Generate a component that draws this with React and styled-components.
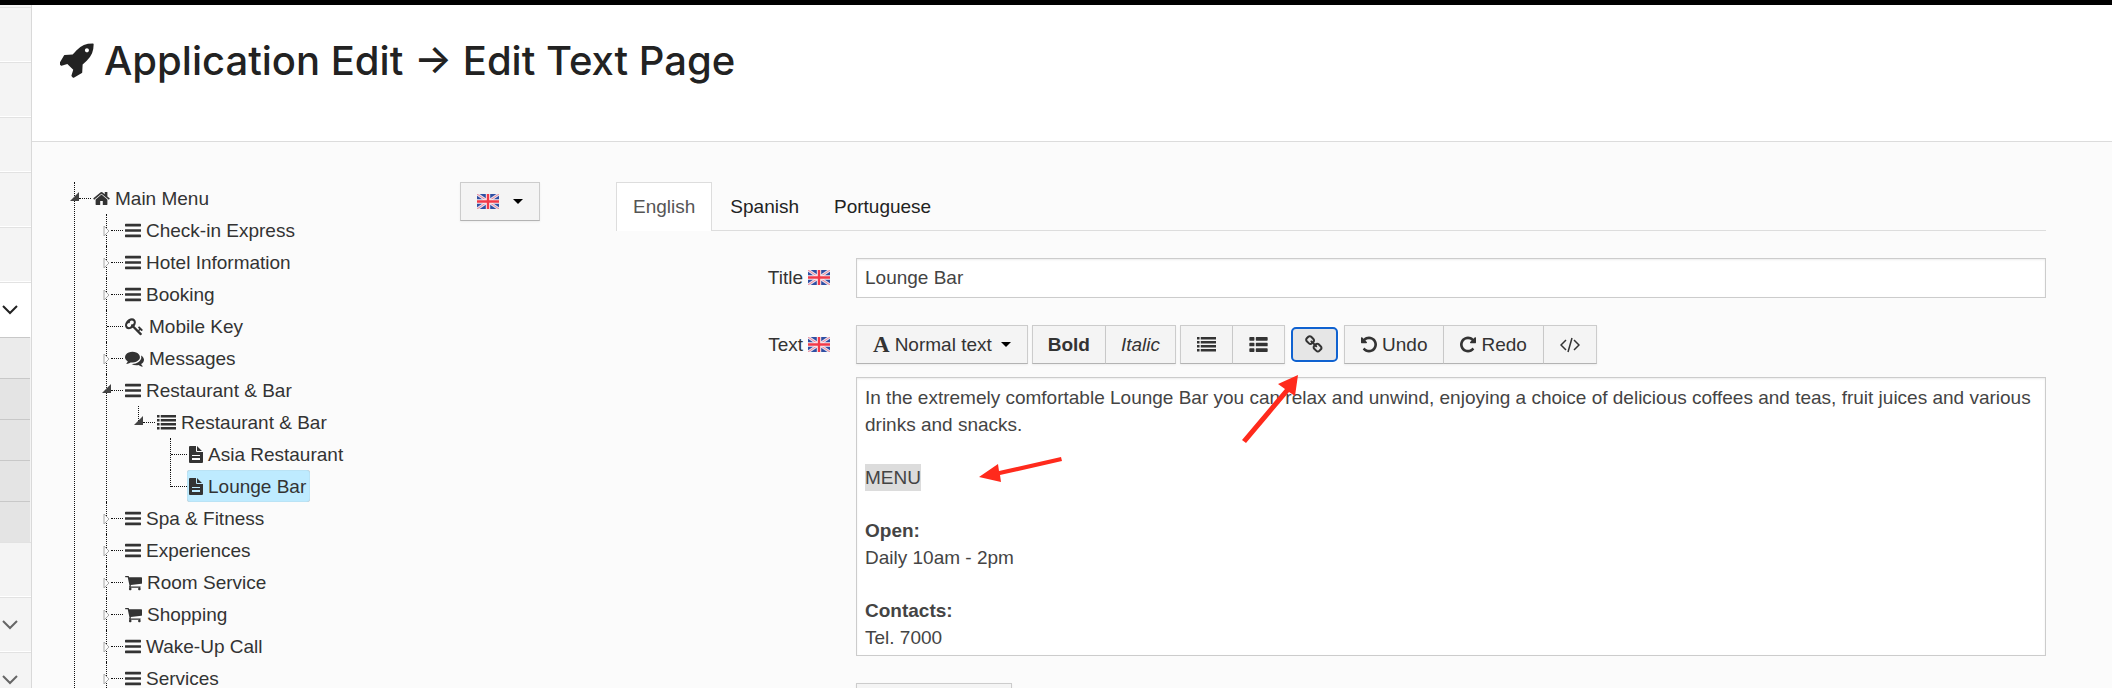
import React from 'react'
import styled, { createGlobalStyle, css } from 'styled-components'

const GlobalStyle = createGlobalStyle`
  * {
    box-sizing: border-box;
  }
  body {
    margin: 0;
    color: #333;
    background-color: #fbfbfb;
    font: 19px/27px 'Liberation Sans', Arial, sans-serif;
  }
  button,
  input,
  select {
    font: inherit;
    color: inherit;
  }
  a {
    color: inherit;
    text-decoration: none;
  }
`

const Page = styled.div`
  display: flex;
  height: 100vh;
  overflow: hidden;
  border-top: 5px solid #000;
`

const Sidebar = styled.nav`
  flex: 0 0 32px;
  padding-top: 2px;
  background-color: #f4f4f4;
  border-right: 1px solid #d9d9d9;
`
const SideItem = styled.button`
  display: flex;
  align-items: center;
  width: 100%;
  height: 55px;
  padding: 0 0 0 2px;
  border: 0;
  border-top: 1px solid #e2e2e2;
  border-bottom: 1px solid #fff;
  color: #666;
  background-color: ${props => props.$active ? '#fff' : 'transparent'};
  ${props => props.$active && css`color: #222;`}
`
const SubItem = styled.button`
  display: block;
  width: 30px;
  height: 41px;
  padding: 0;
  border: 0;
  border-top: 1px solid #c8c8c8;
  background-color: ${props => props.$first ? '#ebebeb' : '#e4e4e4'};
`

const Main = styled.main`
  flex: 1;
  min-width: 0;
`
const Header = styled.header`
  height: 137px;
  padding: 32px 28px;
  background-color: #fff;
  border-bottom: 1px solid #dcdcdc;
`
const Heading = styled.h1`
  display: flex;
  align-items: center;
  gap: 9px;
  margin: 0;
  color: #222;
  font: 500 40px/48px Inter, 'Open Sans', sans-serif;
`
const Content = styled.div`
  display: grid;
  grid-template-columns: 386fr 156fr 1430fr;
  align-items: start;
  padding: 40px 66px 0 42px;
`

const Branch = styled.ul`
  list-style: none;
  margin: 0 0 0 ${props => props.$nested ? '31px' : '0'};
  padding: 0;
`
const Node = styled.li`
  display: grid;
  grid-template-columns: 1px 1fr;
`
const Rail = styled.span`
  position: relative;
  height: ${props => props.$last ? '17px' : 'auto'};
  border-left: 1px dotted #111;
`
const Expander = styled.svg`
  position: absolute;
  top: ${props => props.$open ? '10px' : '11px'};
  left: ${props => props.$open ? '-5px' : '-4px'};
`
const NodeRow = styled.div`
  display: flex;
  align-items: center;
  height: 32px;
`
const Connector = styled.span`
  width: ${props => props.$leaf ? '16px' : '12px'};
  margin-left: ${props => props.$leaf ? '0' : '4px'};
  border-top: 1px dotted #111;
`
const NodeLink = styled.a`
  display: flex;
  align-items: center;
  gap: 5px;
  height: 32px;
  padding: 0 4px 0 2px;
  border-radius: 3px;
  white-space: nowrap;
  ${props => props.$selected && css`
    background-color: #beebff;
    box-shadow: inset 0 0 1px #999;
  `}
`

const Button = styled.button`
  display: inline-flex;
  align-items: center;
  justify-content: center;
  gap: 5px;
  height: 39px;
  padding: 0 16px;
  color: #333;
  background-color: #f4f4f4;
  border: 1px solid #ccc;
  border-bottom-color: #b3b3b3;
  box-shadow: 0 1px 2px rgba(0, 0, 0, 0.06);
  white-space: nowrap;
`
const StyleButton = styled(Button)`
  padding: 0 15px;
  font-weight: ${props => props.$bold ? 700 : 400};
  font-style: ${props => props.$italic ? 'italic' : 'normal'};
`
const LanguageButton = styled(Button)`
  width: 80px;
  gap: 14px;
`
const LinkButton = styled(Button)`
  height: 35px;
  margin: 2px;
  padding: 0 12px;
  background-color: #e6e6e6;
  border: 2px solid #1062d0;
  border-radius: 5px;
  box-shadow: 0 0 0 1px #fff;
`
const Caret = styled.span`
  border: 5px solid transparent;
  border-top-color: #000;
  border-bottom: 0;
  margin-left: ${props => props.$spaced ? '4px' : '0'};
`
const FontGlyph = styled.span`
  font: 700 23px/27px 'Liberation Serif', serif;
`

const Tabs = styled.div`
  display: flex;
  gap: 1px;
  border-bottom: 1px solid #ddd;
`
const Tab = styled.button`
  height: 49px;
  margin-bottom: -1px;
  padding: 0 16px 2px;
  color: ${props => props.$active ? '#555' : '#222'};
  background-color: ${props => props.$active ? '#fff' : 'transparent'};
  border: 1px solid ${props => props.$active ? '#ddd' : 'transparent'};
  border-bottom: 0;
`
const Form = styled.form`
  display: grid;
  gap: 27px;
  padding-top: 27px;
`
const Field = styled.div`
  display: grid;
  grid-template-columns: 24fr 119fr;
  align-items: start;
`
const Label = styled.label`
  display: flex;
  align-items: center;
  justify-content: flex-end;
  gap: 5px;
  height: 39px;
  padding-right: 26px;
`
const TextInput = styled.input`
  width: 100%;
  height: 40px;
  padding: 0 8px;
  color: #444;
  background-color: #fff;
  border: 1px solid #ccc;
  box-shadow: inset 0 1px 2px rgba(0, 0, 0, 0.08);
`
const Toolbar = styled.div`
  display: flex;
  gap: 4px;
  margin-bottom: 13px;
`
const Group = styled.div`
  display: flex;
  ${Button} + ${Button} {
    border-left: 0;
  }
`
const EditorWrap = styled.div`
  position: relative;
`
const Editor = styled.div`
  height: 279px;
  padding: 6px 3px 0 8px;
  color: #444;
  background-color: #fff;
  border: 1px solid #ccc;
  box-shadow: inset 0 1px 2px rgba(0, 0, 0, 0.08);
  overflow: hidden;
`
const Paragraph = styled.p`
  margin: 0 0 26px;
`
const Selection = styled.span`
  display: inline-block;
  background-color: #dcdcdc;
`
const Pointers = styled.svg`
  position: absolute;
  top: -6px;
  left: 116px;
  pointer-events: none;
`
const FooterButton = styled(Button)`
  width: 156px;
`

const icons = {
  rocket: {
    box: '64 128 1664 1664',
    path: 'M1440 448q0-40-28-68t-68-28-68 28-28 68 28 68 68 28 68-28 28-68zm224-288q0 249-75.5 430.5t-253.5 360.5q-81 80-195 176l-20 379q-2 16-16 26l-384 224q-7 4-16 4-12 0-23-9l-64-64q-13-14-8-32l85-276-281-281-276 85q-3 1-9 1-14 0-23-9l-64-64q-17-19-5-39l224-384q10-14 26-16l379-20q96-114 176-195 188-187 358-258t431-71q14 0 24 9.5t10 22.5z'
  },
  home: {
    width: 17,
    box: '64 0 1664 1792',
    path: 'M1472 992v480q0 26-19 45t-45 19h-384v-384h-256v384h-384q-26 0-45-19t-19-45v-480q0-1 .5-3t.5-3l575-474 575 474q1 2 1 6zm223-69l-62 74q-8 9-21 11h-3q-13 0-21-7l-692-577-692 577q-12 8-24 7-13-2-21-11l-62-74q-8-10-7-23.5t11-21.5l719-599q32-26 76-26t76 26l244 204v-195q0-14 9-23t23-9h192q14 0 23 9t9 23v408l219 182q10 8 11 21.5t-7 23.5z'
  },
  bars: {
    width: 16,
    box: '128 0 1536 1792',
    path: 'M1664 1344v128q0 26-19 45t-45 19h-1408q-26 0-45-19t-19-45v-128q0-26 19-45t45-19h1408q26 0 45 19t19 45zm0-512v128q0 26-19 45t-45 19h-1408q-26 0-45-19t-19-45v-128q0-26 19-45t45-19h1408q26 0 45 19t19 45zm0-512v128q0 26-19 45t-45 19h-1408q-26 0-45-19t-19-45v-128q0-26 19-45t45-19h1408q26 0 45 19t19 45z'
  },
  key: {
    path: 'M832 512q0-80-56-136t-136-56-136 56-56 136q0 42 19 83-41-19-83-19-80 0-136 56t-56 136 56 136 136 56 136-56 56-136q0-42-19-83 41 19 83 19 80 0 136-56t56-136zm851 704q0 17-49 66t-66 49q-9 0-28.5-16t-36.5-33-38.5-40-24.5-26l-96 96 220 220q28 28 28 68 0 42-39 81t-81 39q-40 0-68-28l-671-671q-176 131-365 131-163 0-265.5-102.5t-102.5-265.5q0-160 95-313t248-248 313-95q163 0 265.5 102.5t102.5 265.5q0 189-131 365l355 355 96-96q-3-3-26-24.5t-40-38.5-33-36.5-16-28.5q0-17 49-66t66-49q13 0 23 10 6 6 46 44.5t82 79.5 86.5 86 73 78 28.5 41z'
  },
  comments: {
    path: 'M1408 768q0 139-94 257t-256.5 186.5-353.5 68.5q-86 0-176-16-124 88-278 128-36 9-86 16h-3q-11 0-20.5-8t-11.5-21q-1-3-1-6.5t.5-6.5 2-6l2.5-5 3.5-5.5 4-5 4.5-5 4-4.5q5-6 23-25t26-29.5 22.5-29 25-38.5 20.5-44q-124-72-195-177t-71-224q0-139 94-257t256.5-186.5 353.5-68.5 353.5 68.5 256.5 186.5 94 257zm384 256q0 120-71 224.5t-195 176.5q10 24 20.5 44t25 38.5 22.5 29 26 29.5 23 25q1 1 4 4.5t4.5 5 4 5 3.5 5.5l2.5 5 2 6 .5 6.5-1 6.5q-3 14-13 22t-22 7q-50-7-86-16-154-40-278-128-90 16-176 16-271 0-472-132 58 4 88 4 161 0 309-45t264-129q125-92 192-212t67-254q0-77-23-152 129 71 204 178t75 230z'
  },
  cart: {
    width: 17,
    box: '64 0 1664 1792',
    path: 'M704 1536q0 52-38 90t-90 38-90-38-38-90 38-90 90-38 90 38 38 90zm896 0q0 52-38 90t-90 38-90-38-38-90 38-90 90-38 90 38 38 90zm128-1088v512q0 24-16.5 42.5t-40.5 21.5l-1044 122q13 60 13 70 0 16-24 64h920q26 0 45 19t19 45-19 45-45 19h-1024q-26 0-45-19t-19-45q0-11 8-31.5t16-36 21.5-40 15.5-29.5l-177-823h-204q-26 0-45-19t-19-45 19-45 45-19h256q16 0 28.5 6.5t19.5 15.5 13 24.5 8 26 5.5 29.5 4.5 26h1201q26 0 45 19t19 45z'
  },
  list: {
    path: 'M0 192h240v240H0zM352 192h1440v240H352zM0 570h240v240H0zM352 570h1440v240H352zM0 948h240v240H0zM352 948h1440v240H352zM0 1326h240v240H0zM352 1326h1440v240H352z'
  },
  thList: {
    path: 'M96 192h352q64 0 64 64v224q0 64-64 64H96q-64 0-64-64V256q0-64 64-64zM704 192h992q64 0 64 64v224q0 64-64 64H704q-64 0-64-64V256q0-64 64-64zM96 720h352q64 0 64 64v224q0 64-64 64H96q-64 0-64-64V784q0-64 64-64zM704 720h992q64 0 64 64v224q0 64-64 64H704q-64 0-64-64V784q0-64 64-64zM96 1248h352q64 0 64 64v224q0 64-64 64H96q-64 0-64-64v-224q0-64 64-64zM704 1248h992q64 0 64 64v224q0 64-64 64H704q-64 0-64-64v-224q0-64 64-64z'
  },
  file: {
    width: 14,
    height: 17,
    box: '0 0 14 17',
    path: 'M1 0h6v5q0 1 1 1h6v10q0 1-1 1H1q-1 0-1-1V1q0-1 1-1zM8 0l5 5H8zM3 9v1h8V9zM3 12v2h8v-2z'
  },
  link: {
    path: 'M1456 1216q0-40-28-68l-208-208q-28-28-68-28-42 0-72 32 3 3 19 18.5t21.5 21.5 15 19 13 25.5 3.5 27.5q0 40-28 68t-68 28q-15 0-27.5-3.5t-25.5-13-19-15-21.5-21.5-18.5-19q-33 31-33 73 0 40 28 68l206 207q27 27 68 27 40 0 68-26l147-146q28-28 28-67zm-703-705q0-40-28-68l-206-207q-28-28-68-28-39 0-68 27l-147 146q-28 28-28 67 0 40 28 68l208 208q27 27 68 27 42 0 72-31-3-3-19-18.5t-21.5-21.5-15-19-13-25.5-3.5-27.5q0-40 28-68t68-28q15 0 27.5 3.5t25.5 13 19 15 21.5 21.5 18.5 19q33-31 33-73zm895 705q0 120-85 203l-147 146q-83 83-203 83-121 0-204-85l-206-207q-83-83-83-203 0-123 88-209l-88-88q-86 88-208 88-120 0-204-84l-208-208q-84-84-84-204t85-203l147-146q83-83 203-83 121 0 204 85l206 207q83 83 83 203 0 123-88 209l88 88q86-88 208-88 120 0 204 84l208 208q84 84 84 204z'
  },
  undo: {
    width: 16,
    box: '128 0 1536 1792',
    path: 'M1664 896q0 156-61 298t-164 245-245 164-298 61q-172 0-327-72.5t-264-204.5q-7-10-6.5-22.5t8.5-20.5l137-138q10-9 25-9 16 2 23 12 73 95 179 147t225 52q104 0 198.5-40.5t163.5-109.5 109.5-163.5 40.5-198.5-40.5-198.5-109.5-163.5-163.5-109.5-198.5-40.5q-98 0-188 35.5t-160 101.5l137 138q31 30 14 69-17 40-59 40h-448q-26 0-45-19t-19-45v-448q0-42 40-59 39-17 69 14l130 129q107-101 244.5-156.5t284.5-55.5q156 0 298 61t245 164 164 245 61 298z'
  }
}

const Icon = ({ name, width, height, flip }) => {
  const icon = icons[name]
  return (
    <svg
      width={width || icon.width || 19}
      height={height || icon.height || 19}
      viewBox={icon.box || '0 0 1792 1792'}
      fill="currentColor"
      fillRule={name === 'file' ? 'evenodd' : 'nonzero'}
      aria-hidden="true"
    >
      <path d={icon.path} transform={flip ? 'matrix(-1 0 0 1 1792 0)' : undefined} />
    </svg>
  )
}

const Flag = () => (
  <svg width="22" height="15" viewBox="0 0 22 15" aria-hidden="true">
    <rect width="22" height="15" fill="#2f4fa3" />
    <path d="M0 0l22 15M22 0L0 15" stroke="#e6e0ee" strokeWidth="3" />
    <path d="M0 0l22 15M22 0L0 15" stroke="#f08a96" strokeWidth="1" />
    <path d="M11 0v15M0 7.5h22" stroke="#fbeef0" strokeWidth="4.4" />
    <path d="M11 0v15M0 7.5h22" stroke="#f23a48" strokeWidth="2.4" />
  </svg>
)

const Chevron = () => (
  <svg width="16" height="10" viewBox="0 0 16 10" fill="none" stroke="currentColor" strokeWidth="2" aria-hidden="true">
    <path d="M1 1l7 7 7-7" />
  </svg>
)

const tree = [
  { name: 'Main Menu', icon: 'home', children: [
    { name: 'Check-in Express', icon: 'bars', closed: true },
    { name: 'Hotel Information', icon: 'bars', closed: true },
    { name: 'Booking', icon: 'bars', closed: true },
    { name: 'Mobile Key', icon: 'key' },
    { name: 'Messages', icon: 'comments', closed: true },
    { name: 'Restaurant & Bar', icon: 'bars', children: [
      { name: 'Restaurant & Bar', icon: 'list', last: true, children: [
        { name: 'Asia Restaurant', icon: 'file' },
        { name: 'Lounge Bar', icon: 'file', selected: true, last: true }
      ] }
    ] },
    { name: 'Spa & Fitness', icon: 'bars', closed: true },
    { name: 'Experiences', icon: 'bars', closed: true },
    { name: 'Room Service', icon: 'cart', closed: true },
    { name: 'Shopping', icon: 'cart', closed: true },
    { name: 'Wake-Up Call', icon: 'bars', closed: true },
    { name: 'Services', icon: 'bars', closed: true }
  ] }
]

const TreeBranch = ({ nodes, nested }) => (
  <Branch $nested={nested}>
    {nodes.map((node, index) => (
      <Node key={index}>
        <Rail $last={node.last}>
          {node.children && (
            <Expander $open width="9" height="9" viewBox="0 0 9 9">
              <path d="M9 0v9H0z" fill="#444" />
            </Expander>
          )}
          {node.closed && (
            <Expander width="8" height="12" viewBox="0 0 8 12">
              <path d="M1 1l5 5-5 5z" fill="#fbfbfb" stroke="#aaa" />
            </Expander>
          )}
        </Rail>
        <div>
          <NodeRow>
            <Connector $leaf={!node.children && !node.closed} />
            <NodeLink href="#" $selected={node.selected}>
              <Icon name={node.icon} />
              {node.name}
            </NodeLink>
          </NodeRow>
          {node.children && <TreeBranch nodes={node.children} nested />}
        </div>
      </Node>
    ))}
  </Branch>
)

const EditorToolbar = () => (
  <Toolbar>
    <Button type="button">
      <FontGlyph>A</FontGlyph>
      Normal text
      <Caret $spaced />
    </Button>
    <Group>
      <StyleButton type="button" $bold>Bold</StyleButton>
      <StyleButton type="button" $italic>Italic</StyleButton>
    </Group>
    <Group>
      <Button type="button" aria-label="Unordered list"><Icon name="list" /></Button>
      <Button type="button" aria-label="Ordered list"><Icon name="thList" /></Button>
    </Group>
    <LinkButton type="button" aria-label="Insert link"><Icon name="link" /></LinkButton>
    <Group>
      <Button type="button"><Icon name="undo" />Undo</Button>
      <Button type="button"><Icon name="undo" flip />Redo</Button>
      <Button type="button" aria-label="Edit HTML">
        <svg width="20" height="16" viewBox="0 0 20 16" fill="none" stroke="currentColor" strokeWidth="1.5" aria-hidden="true">
          <path d="M6 3L1 8l5 5M14 3l5 5-5 5M12 1L8 15" />
        </svg>
      </Button>
    </Group>
  </Toolbar>
)

class App extends React.Component {
  render () {
    return (
      <Page>
        <GlobalStyle />
        <Sidebar>
          <SideItem />
          <SideItem />
          <SideItem />
          <SideItem />
          <SideItem />
          <SideItem $active><Chevron /></SideItem>
          <SubItem $first />
          <SubItem />
          <SubItem />
          <SubItem />
          <SubItem />
          <SideItem />
          <SideItem><Chevron /></SideItem>
          <SideItem><Chevron /></SideItem>
        </Sidebar>
        <Main>
          <Header>
            <Heading>
              <Icon name="rocket" width={35} height={36} />
              Application Edit → Edit Text Page
            </Heading>
          </Header>
          <Content>
            <TreeBranch nodes={tree} />
            <LanguageButton type="button" aria-label="Language">
              <Flag />
              <Caret />
            </LanguageButton>
            <div>
              <Tabs role="tablist">
                <Tab role="tab" $active>English</Tab>
                <Tab role="tab">Spanish</Tab>
                <Tab role="tab">Portuguese</Tab>
              </Tabs>
              <Form>
                <Field>
                  <Label htmlFor="title">Title <Flag /></Label>
                  <TextInput id="title" defaultValue="Lounge Bar" />
                </Field>
                <Field>
                  <Label as="span" id="text-label">Text <Flag /></Label>
                  <div>
                    <EditorToolbar />
                    <EditorWrap>
                      <Editor
                        role="textbox"
                        aria-multiline="true"
                        aria-labelledby="text-label"
                        contentEditable
                        suppressContentEditableWarning
                      >
                        <Paragraph>
                          In the extremely comfortable Lounge Bar you can relax and unwind, enjoying a choice of delicious coffees and teas, fruit juices and various drinks and snacks.
                        </Paragraph>
                        <Paragraph><Selection>MENU</Selection></Paragraph>
                        <Paragraph><b>Open:</b><br />Daily 10am - 2pm</Paragraph>
                        <Paragraph><b>Contacts:</b><br />Tel. 7000</Paragraph>
                      </Editor>
                      <Pointers width="330" height="120" viewBox="972 371 330 120" fill="#ff2a1c" aria-hidden="true">
                        <path d="M1298 375l-3 21-6-4-43 51-4-3 43-51-7-5z" />
                        <path d="M979 477l19-13 1 7 62-14 1 4-62 14 1 7z" />
                      </Pointers>
                    </EditorWrap>
                  </div>
                </Field>
                <Field>
                  <span />
                  <FooterButton type="button" aria-label="Save" />
                </Field>
              </Form>
            </div>
          </Content>
        </Main>
      </Page>
    )
  }
}
export default App
